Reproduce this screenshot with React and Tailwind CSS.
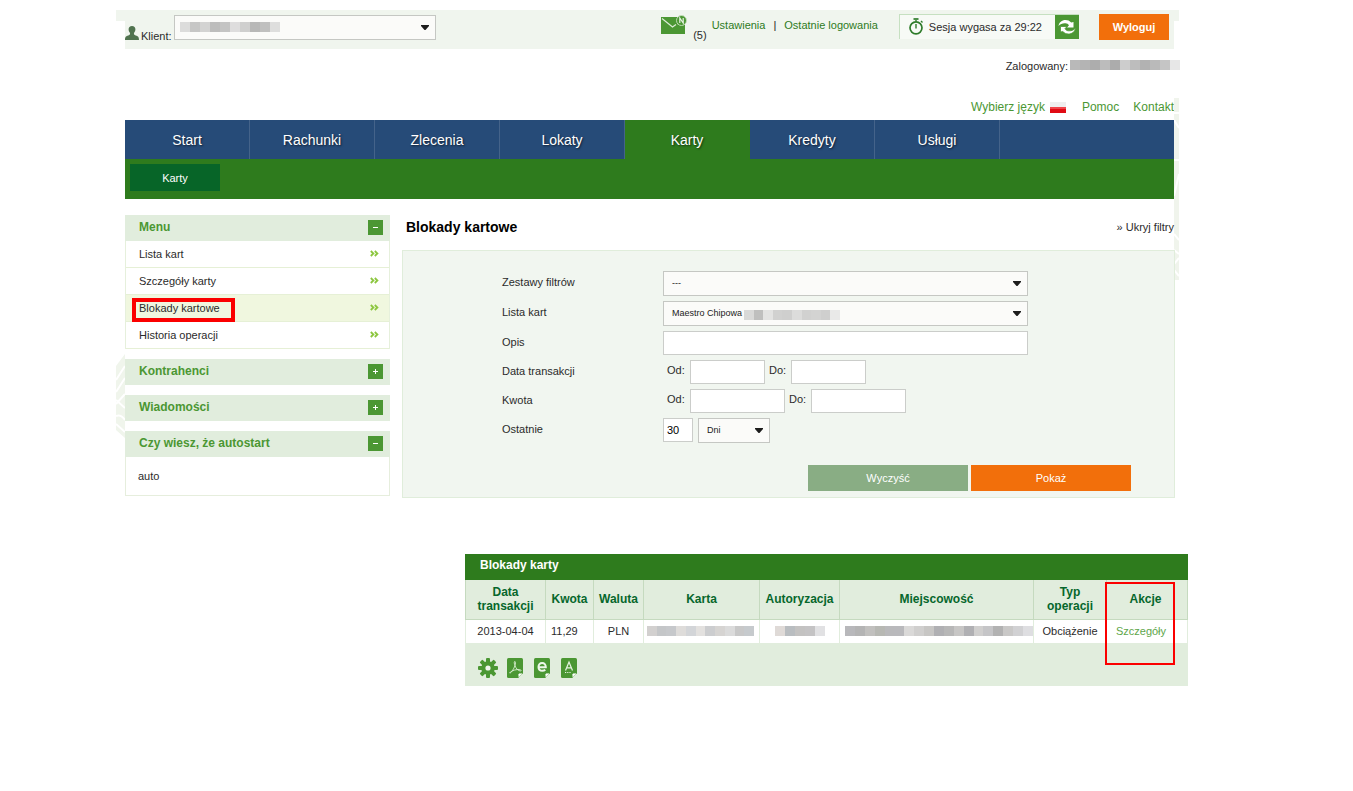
import React from "react";

const NAV = ["Start", "Rachunki", "Zlecenia", "Lokaty", "Karty", "Kredyty", "Usługi"];
const MENU = ["Lista kart", "Szczegóły karty", "Blokady kartowe", "Historia operacji"];

function Mosaic({ cells, className = "" }) {
  return (
    <span aria-hidden="true" className={"flex h-[10px] " + className}>
      {cells.map((c, i) => (
        <span key={i} className="flex-1" style={{ backgroundColor: c }} />
      ))}
    </span>
  );
}

function SelectBox({ id, label, className = "", value, children }) {
  return (
    <span className={"relative block h-[25px] " + className}>
      <select
        id={id}
        aria-label={label}
        className="block h-full w-full appearance-none border border-[#c5c7c3] bg-[#fbfbf9] pl-2 pr-5 text-[9px] text-[#222] outline-none"
      >
        <option>{value}</option>
      </select>
      <svg viewBox="0 0 8 5" className="pointer-events-none absolute right-[7px] top-[10px] h-[5px] w-2">
        <path d="M0 0h8v1L4.500 5h-1L0 1z" fill="#1d1d1d" />
      </svg>
      {children}
    </span>
  );
}

function TextBox({ id, label, className, value }) {
  return (
    <input
      id={id}
      aria-label={label}
      type="text"
      defaultValue={value}
      className={"block h-6 border border-[#cbcdca] bg-white px-[3px] text-[11px] text-black outline-none " + className}
    />
  );
}

function Row({ label, htmlFor, children }) {
  return (
    <div className="flex items-start">
      <label htmlFor={htmlFor} className="w-[161px] shrink-0 pt-1 text-[11px] leading-[14px]">
        {label}
      </label>
      <div className="flex min-w-0 flex-1 items-start">{children}</div>
    </div>
  );
}

function PanelHead({ title, open }) {
  return (
    <div className="flex h-[26px] items-start justify-between bg-[#e1eddd] pl-[14px] pr-[7px]">
      <h2 className="pt-1 text-[12px] leading-4 font-bold text-[#4b9733]">{title}</h2>
      <button type="button" aria-label={title} aria-expanded={open} className="mt-[5px] h-[15px] w-[15px] bg-[#4b9733]">
        <svg viewBox="0 0 15 15" className="h-[15px] w-[15px]" fill="#fff">
          <rect x="5" y="7" width="5" height="1" />
          {!open && <rect x="7" y="5" width="1" height="5" />}
        </svg>
      </button>
    </div>
  );
}

function Chevrons() {
  return (
    <svg viewBox="0 0 9 7" className="mb-[2px] h-[7px] w-[9px]" fill="none" stroke="#8cc63f" strokeWidth="1.8">
      <path d="M.8 1 3.400 3.500.8 6M4.800 1l2.600 2.500L4.800 6" />
    </svg>
  );
}

function DocIcon({ children }) {
  return (
    <svg viewBox="0 0 16 20" className="h-5 w-4">
      <path d="M1.500 0h13Q16 0 16 1.500V15l-5 5H1.500Q0 20 0 18.500V1.500Q0 0 1.500 0z" fill="#4b9733" />
      <path d="M11 20v-4.200q0-.8.8-.8H16z" fill="#4b9733" />
      <path d="M11.800 18.800V16.300q0-.5.500-.5h2.600z" fill="#fff" stroke="#fff" strokeWidth=".6" />
      {children}
    </svg>
  );
}

const TH = "border-l border-b border-[#c5dabf] px-1 pb-[2px] text-center align-middle text-[12px] leading-[14px] font-bold text-[#06672c]";
const TD = "border-l border-[#e1eddd] pb-px text-center align-middle text-[11px] leading-[14px]";

export default function App() {
  return (
    <div className="relative overflow-hidden bg-white pt-[10px] pb-[105px] font-['Liberation_Sans',Arial,sans-serif] text-[11px] text-[#2b2b2b]">
      <svg viewBox="0 0 9 84" className="absolute left-[116px] top-[354px] h-[84px] w-[9px]">
        <path d="M9 0v84L0 76V12z" fill="#f0f5ec" />
        <path d="M0 26 9 12M0 38l9-14M0 50l9-10M0 46l9 8M0 62q5-2 9 4M0 70l9 8" stroke="#fff" strokeWidth="2" fill="none" />
      </svg>
      <div className="absolute left-[116px] top-[10px] h-[11px] w-[9px] bg-[#f0f5ee]" />

      <header className="pr-[179px] pl-[125px]">
        <div className="relative flex h-[39px] items-start justify-between bg-[#f0f5ee] pr-[5px]">
          <div className="absolute -right-[5px] top-0 h-[11px] w-[5px] bg-[#f0f5ee]" />
          <svg viewBox="0 0 5 182" className="absolute -right-[5px] top-[88px] h-[182px] w-[5px]">
            <path d="M0 0h5v182H0z" fill="#f0f4ec" />
            <path d="M0 15h5M0 22l5 8M0 62h5M0 98l5-22M0 136l5 6M0 152l5 4M0 166l5-6M0 172l5 6" stroke="#fff" strokeWidth="2" fill="none" />
          </svg>
          <div className="flex items-start">
            <svg viewBox="0 0 14 14" className="mt-4 h-[14px] w-[14px]" fill="#50734f">
              <path d="M7 0c2.200 0 3.400 1.400 3.400 3.300 0 1.500-.5 2.700-1.400 3.600-.3 1.400.2 1.900 1.700 2.500 2.400.8 3.300 1.300 3.300 4.600H0c0-3.300.9-3.800 3.300-4.600 1.500-.6 2-1.100 1.700-2.500-.9-.9-1.400-2.100-1.400-3.600C3.600 1.400 4.800 0 7 0z" />
            </svg>
            <label htmlFor="klient" className="mr-[2px] ml-[2px] pt-[19px] leading-[14px]">
              Klient:
            </label>
            <SelectBox id="klient" className="mt-[5px] w-[262px]" value="">
              <Mosaic
                className="pointer-events-none absolute left-[6px] top-[7px] w-[100px]"
                cells={["#dcdcdb", "#c6c6c5", "#d3d3d2", "#bdbdbc", "#c4c4c3", "#dedddd", "#cfcfce", "#b8b8b7", "#c0c0bf", "#dededd"]}
              />
            </SelectBox>
          </div>
          <div className="flex items-start">
            <a href="#wiadomosci" className="mr-[5px] flex items-start">
              <svg viewBox="0 0 26 19" className="mt-[5px] h-[19px] w-[26px]">
                <rect x="0" y="2" width="24" height="17" fill="#4b9733" />
                <path d="M1 3.500 11.500 12 15 9.500M16.500 9 23 6" stroke="#dcebd7" strokeWidth="1.200" fill="none" />
                <circle cx="20.500" cy="5.500" r="5" fill="#4b9733" stroke="#c8e0c0" strokeWidth=".9" />
                <path d="M18.800 8V3l3.400 5V3" stroke="#e6f2e1" strokeWidth="1.200" fill="none" />
              </svg>
              <span className="ml-[6px] pt-[18px] leading-[14px] text-[#2b2b2b]">(5)</span>
            </a>
            <nav className="mr-[21px] flex gap-2 pt-2 leading-[14px] text-[#2e7b1d]">
              <a href="#ustawienia">Ustawienia</a>
              <span className="text-[#222]">|</span>
              <a href="#logowania">Ostatnie logowania</a>
            </nav>
            <div className="mt-1 mr-5 flex h-[25px] border-t border-l border-[#c6e0c1] bg-[#f7faf6]">
              <svg viewBox="0 0 16 17" className="mr-[5px] ml-2 mt-[3px] h-[17px] w-4" fill="none" stroke="#2e7b2a">
                <circle cx="8" cy="9.800" r="6" strokeWidth="1.700" />
                <path d="M8 6v4.500M8 3.500V2M13 3l1.500 1.500" strokeWidth="1.400" />
                <path d="M5.500 1h5" strokeWidth="1.700" />
              </svg>
              <span className="mr-[13px] pt-[5px] leading-[14px] whitespace-nowrap">Sesja wygasa za 29:22</span>
              <button type="button" aria-label="Odśwież sesję" className="h-6 w-6 bg-[#4b9733]">
                <svg viewBox="0 0 24 24" className="h-6 w-6" fill="#fff">
                  <path d="M3.500 11C4 7.500 6.800 5 10.500 5c2.300 0 4.200.8 5.700 2.500L18.500 7v5.500h-6.500l2-2.200C13.200 9 12 8.300 10.500 8.200 7.800 8 5.200 8.800 3.500 11z" />
                  <path d="M20.500 13C20 16.500 17.200 19 13.500 19c-2.300 0-4.200-.8-5.700-2.500L5.500 17v-5.500H12l-2 2.200c.8 1.300 2 2 3.500 2.100 2.700.2 5.300-.6 7-2.800z" stroke="#4b9733" strokeWidth=".8" />
                </svg>
              </button>
            </div>
            <button type="button" className="mt-1 h-[26px] w-[70px] bg-[#f26f0b] text-[11px] font-bold text-white">
              Wyloguj
            </button>
          </div>
        </div>
      </header>

      <div className="mt-[10px] flex items-start justify-end pr-[173px] leading-[14px]">
        <span>Zalogowany:</span>
        <Mosaic
          className="mt-px ml-[2px] w-[110px]"
          cells={["#b9b9b9", "#b4b4b4", "#adadad", "#bcbcbc", "#acacac", "#cdcdcd", "#bdbdbd", "#b2b2b2", "#bababa", "#c5c5c5", "#e7e7e7"]}
        />
      </div>

      <div className="mt-[26px] flex items-center justify-end pr-[179px] text-[12px] leading-4 text-[#4b9733]">
        <a href="#jezyk" className="flex items-center gap-[5px]">
          Wybierz język
          <svg viewBox="0 0 16 11" className="mt-px h-[11px] w-4">
            <rect width="16" height="11" fill="#efefef" />
            <rect y="5" width="16" height="6" fill="#e00b14" />
            <rect y="5" width="16" height="2" fill="#f0444a" />
          </svg>
        </a>
        <a href="#pomoc" className="ml-4">Pomoc</a>
        <a href="#kontakt" className="ml-[14px]">Kontakt</a>
      </div>

      <div className="mt-[5px] mr-[179px] ml-[125px] bg-[#264b78]">
        <nav className="flex h-[39px] text-[14px] text-white [text-shadow:1px_1px_2px_rgba(0,0,0,0.6)]">
          {NAV.map((n) => (
            <a
              key={n}
              href={"#" + n}
              className={
                "flex w-[125px] items-center justify-center border-r pt-px " +
                (n === "Karty" ? "border-[#2e7b1d] bg-[#2e7b1d]" : "border-[#44638a]")
              }
            >
              {n}
            </a>
          ))}
        </nav>
        <div className="h-10 bg-[#2e7b1d] pt-[5px] pl-[5px]">
          <a href="#karty" className="flex h-[27px] w-[90px] items-center justify-center bg-[#076528] pt-px text-white">
            Karty
          </a>
        </div>
      </div>

      <div className="mt-4 flex items-start gap-3 pr-[178px] pl-[125px]">
        <aside className="flex w-[265px] shrink-0 flex-col gap-[10px]">
          <section>
            <PanelHead title="Menu" open />
            <ul className="border-x border-[#e6f0dc]">
              {MENU.map((m) => {
                const on = m === "Blokady kartowe";
                return (
                  <li key={m} className={"relative border-b border-[#e6f0d6] " + (on ? "bg-[#f0f7df]" : "bg-white")}>
                    <a href={"#" + m} className="flex h-[26px] items-center justify-between pr-[10px] pl-[13px]">
                      {m}
                      <Chevrons />
                    </a>
                    {on && <span className="pointer-events-none absolute left-[6px] top-[3px] h-6 w-[103px] border-4 border-[#fb0000]" />}
                  </li>
                );
              })}
            </ul>
          </section>
          <PanelHead title="Kontrahenci" open={false} />
          <PanelHead title="Wiadomości" open={false} />
          <section>
            <PanelHead title="Czy wiesz, że autostart" open />
            <p className="border-x border-b border-[#e6eedd] px-3 py-3 leading-[14px]">auto</p>
          </section>
        </aside>

        <main className="relative min-w-0 flex-1">
          <div className="flex items-start justify-between pt-1 pr-px pl-1 leading-4">
            <h1 className="text-[14px] font-bold text-black">Blokady kartowe</h1>
            <a href="#filtry">» Ukryj filtry</a>
          </div>
          <form className="mt-[15px] border border-[#e0eddb] bg-[#f1f6f0] pt-5 pb-[6px]" onSubmit={(e) => e.preventDefault()}>
            <div className="flex flex-col gap-[5px] pr-[146px] pl-[99px]">
              <Row label="Zestawy filtrów" htmlFor="zestawy">
                <SelectBox id="zestawy" className="w-full" value="---" />
              </Row>
              <Row label="Lista kart" htmlFor="lista">
                <SelectBox id="lista" className="w-full" value="Maestro Chipowa">
                  <Mosaic
                    className="pointer-events-none absolute left-[81px] top-[9px] w-24"
                    cells={["#d9d9d8", "#bfbfbe", "#e3e3e2", "#d1d1d0", "#cfcfce", "#dcdcdb", "#d1d1d0", "#d3d3d2", "#cfcfce", "#e9e9e8"]}
                  />
                </SelectBox>
              </Row>
              <Row label="Opis" htmlFor="opis">
                <TextBox id="opis" className="w-full" />
              </Row>
              <Row label="Data transakcji" htmlFor="data-od">
                <label htmlFor="data-od" className="w-[27px] pt-[3px] pl-1 leading-[14px]">Od:</label>
                <TextBox id="data-od" className="w-[75px]" />
                <label htmlFor="data-do" className="w-[26px] pt-[3px] pl-1 leading-[14px]">Do:</label>
                <TextBox id="data-do" className="w-[75px]" />
              </Row>
              <Row label="Kwota" htmlFor="kwota-od">
                <label htmlFor="kwota-od" className="w-[27px] pt-[3px] pl-1 leading-[14px]">Od:</label>
                <TextBox id="kwota-od" className="w-[95px]" />
                <label htmlFor="kwota-do" className="w-[26px] pt-[3px] pl-1 leading-[14px]">Do:</label>
                <TextBox id="kwota-do" className="w-[95px]" />
              </Row>
              <Row label="Ostatnie" htmlFor="ostatnie">
                <TextBox id="ostatnie" className="mr-[5px] w-[30px]" value="30" />
                <SelectBox id="jednostka" label="Jednostka czasu" className="w-[72px]" value="Dni" />
              </Row>
            </div>
            <div className="mt-[22px] flex justify-end gap-[3px] pr-[43px]">
              <button type="reset" className="h-[26px] w-40 bg-[#89ad84] text-[11px] text-white">Wyczyść</button>
              <button type="submit" className="h-[26px] w-40 bg-[#f26f0b] text-[11px] text-white">Pokaż</button>
            </div>
          </form>
        </main>
      </div>

      <section className="relative mt-14 mr-[165px] ml-[465px] bg-[#e1eddd]">
        <h2 className="h-[26px] bg-[#2e7b1d] pt-[3px] pl-[15px] text-[12px] leading-4 font-bold text-white">Blokady karty</h2>
        <table className="w-full table-fixed border-separate border-spacing-0">
          <colgroup>
            <col className="w-[80px]" />
            <col className="w-[48px]" />
            <col className="w-[50px]" />
            <col className="w-[116px]" />
            <col className="w-[80px]" />
            <col />
            <col className="w-[73px]" />
            <col className="w-[82px]" />
          </colgroup>
          <thead>
            <tr className="h-10">
              <th className={TH}>Data transakcji</th>
              <th className={TH}>Kwota</th>
              <th className={TH}>Waluta</th>
              <th className={TH}>Karta</th>
              <th className={TH}>Autoryzacja</th>
              <th className={TH}>Miejscowość</th>
              <th className={TH}>Typ operacji</th>
              <th className={TH + " border-r"}><span className="block pr-[3px]">Akcje</span></th>
            </tr>
          </thead>
          <tbody>
            <tr className="h-[23px] bg-white">
              <td className={TD}>2013-04-04</td>
              <td className={TD}><span className="block pl-[5px] text-left">11,29</span></td>
              <td className={TD}>PLN</td>
              <td className={TD}>
                <Mosaic className="mx-[3px] w-[107px]" cells={["#d2d0cf", "#c4c6c8", "#c6c8cb", "#dedcda", "#d3d5d8", "#e3e1df", "#cccdcf", "#d6d4d2", "#dbdbdb", "#c8c8c8", "#c6cacd"]} />
              </td>
              <td className={TD}>
                <Mosaic className="mx-auto w-[50px]" cells={["#dfdad7", "#b9bdc0", "#c3c2c1", "#c4c3c4", "#e1e1e3"]} />
              </td>
              <td className={TD}>
                <Mosaic
                  className="ml-[5px]"
                  cells={["#b8b8bb", "#b4b4b4", "#c1c0be", "#b7b8b3", "#b9b9bb", "#b9b9bc", "#dad9d8", "#d0cfce", "#c7c6c4", "#b0b0b3", "#b7b7b7", "#c7c6c5", "#b0b0b3", "#d0cfce", "#c5c5c7", "#b2b2b2", "#c9c8c7", "#d1d1d3", "#dedee1"]}
                />
              </td>
              <td className={TD}>Obciążenie</td>
              <td className={TD + " border-r"}>
                <a href="#szczegoly" className="block pr-3 text-[#5ea64a]">Szczegóły</a>
              </td>
            </tr>
          </tbody>
        </table>
        <div className="flex h-[43px] items-start gap-[11px] pt-[15px] pl-[13px]">
          <button type="button" aria-label="Ustawienia tabeli" className="-mr-[2px]">
            <svg viewBox="0 0 20 20" className="h-5 w-5">
              <g fill="#4b9733">
                <circle cx="10" cy="10" r="6.800" />
                {[0, 45, 90, 135, 180, 225, 270, 315].map((a) => (
                  <rect key={a} x="8" y="0" width="4" height="5" rx="1" transform={"rotate(" + a + " 10 10)"} />
                ))}
              </g>
              <circle cx="10" cy="10" r="2.600" fill="#f0f6ee" />
            </svg>
          </button>
          <button type="button" aria-label="Eksport PDF">
            <DocIcon>
              <path d="M7.800 3.500c-.9 0-.6 2 .2 4.200 1 2.700 3 5 5.200 5.300 1.500.1 1-1.400-.8-1.500-3-.2-7 .9-9 2.500-1.200 1-.6 1.600.4.600C6 12.500 8.300 8 8.500 5c0-1-.2-1.500-.7-1.500z" fill="none" stroke="#d9efd1" strokeWidth=".9" />
            </DocIcon>
          </button>
          <button type="button" aria-label="Eksport elektroniczny">
            <DocIcon>
              <path d="M4.600 9.300h7.200C11.800 6.500 10.300 5 8.100 5 5.900 5 4.500 6.700 4.500 8.900c0 2.300 1.500 3.800 3.800 3.800 1.300 0 2.300-.4 3-1" fill="none" stroke="#eef7ea" strokeWidth="2" />
            </DocIcon>
          </button>
          <button type="button" aria-label="Eksport tekstowy">
            <DocIcon>
              <path d="M4.500 12.500 8 4l3.500 8.500M5.600 9.800h4.800" fill="none" stroke="#e6f3e1" strokeWidth="1.200" />
              <path d="M4 14.500h1.200M6.200 14.500h1.200M8.400 14.500h1.200" stroke="#e6f3e1" strokeWidth="1.200" />
            </DocIcon>
          </button>
        </div>
        <span className="pointer-events-none absolute right-[13px] top-7 h-[83px] w-[70px] border-2 border-[#fb0000]" />
      </section>
    </div>
  );
}
